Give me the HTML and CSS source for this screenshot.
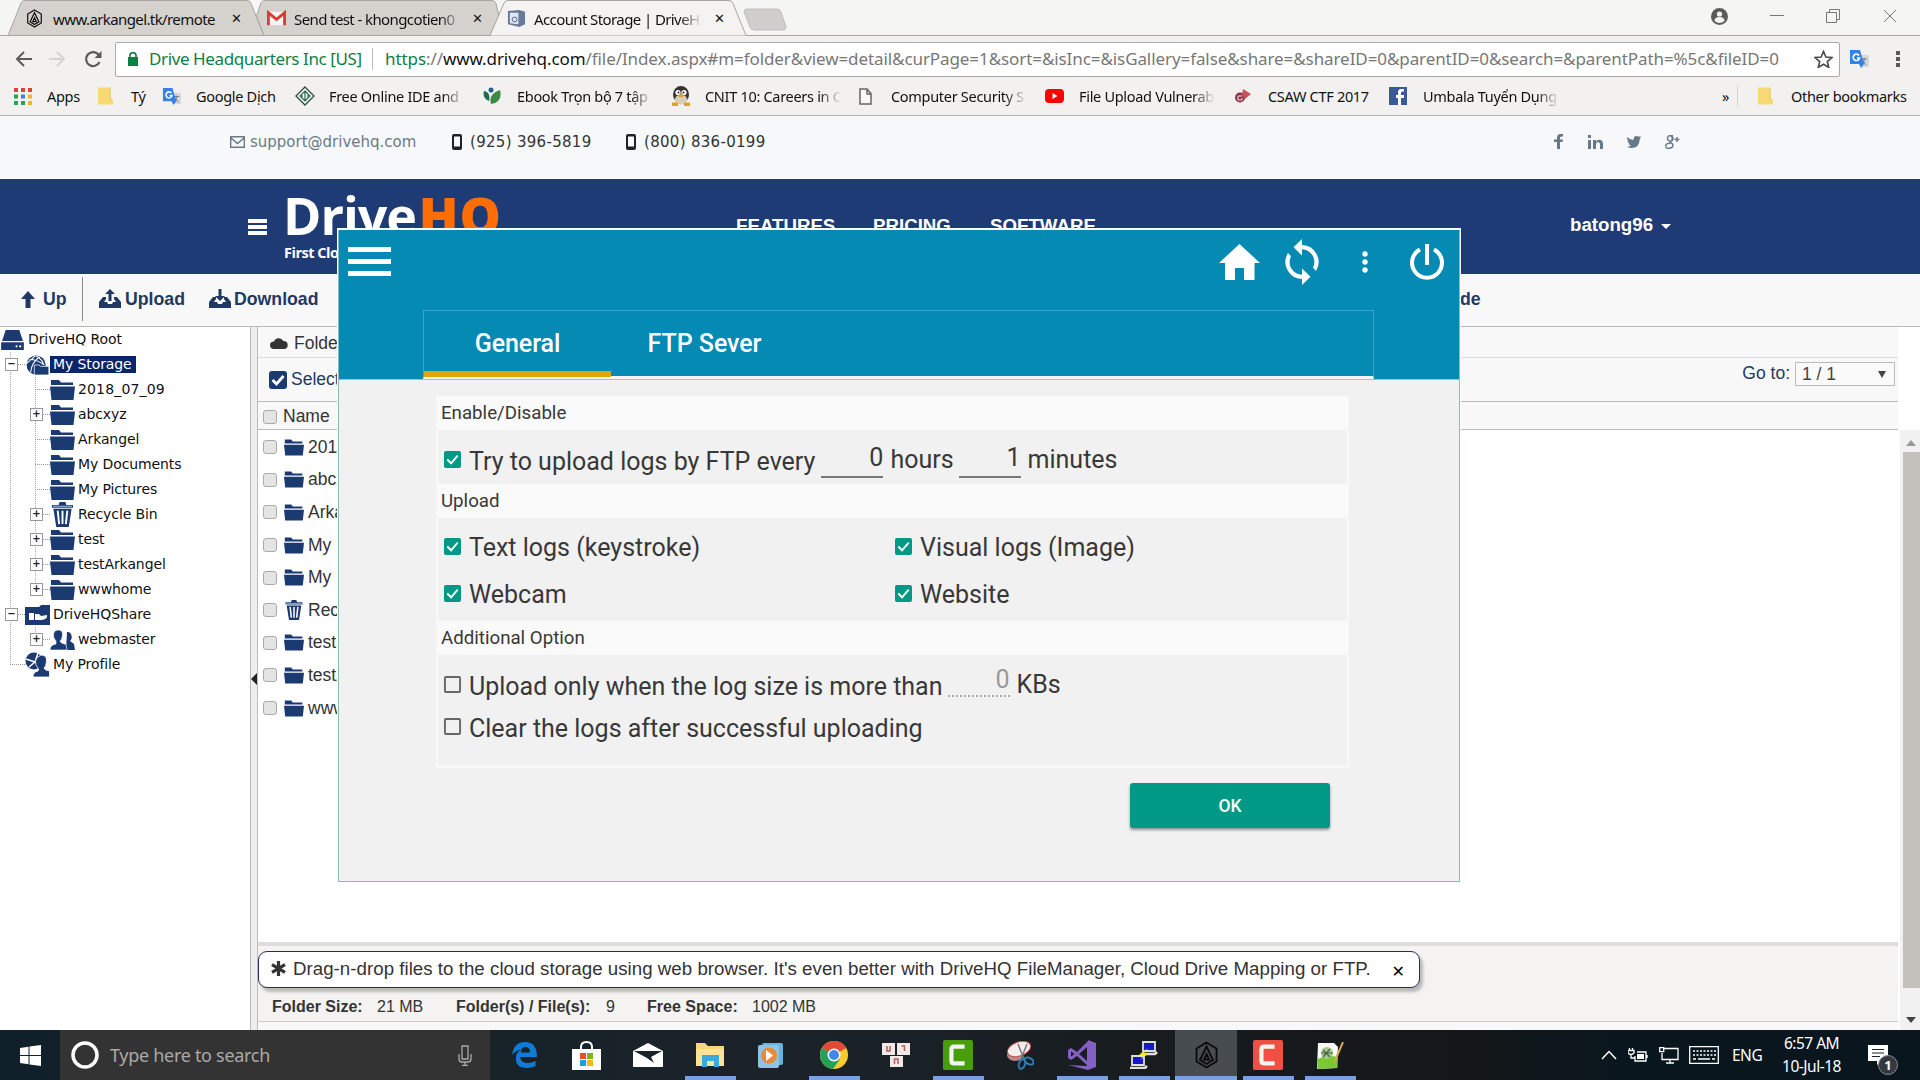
FILE: index.html
```html
<!DOCTYPE html>
<html lang="en">
<head>
<meta charset="utf-8">
<title>Account Storage | DriveHQ</title>
<link rel="stylesheet" href="styles.css">
</head>
<body>
<svg class="sprite" aria-hidden="true">
  <symbol id="arkangel" viewBox="0 0 24 28"><path d="M12 1.500 22 7.500v13l-10 6-10-6v-13zM12 5.500 5.500 19l6.500 4 6.500-4zM12 13l-2.500 5.500h5z" fill="none" stroke="currentColor" stroke-width="1.800"/></symbol>
  <symbol id="folder" viewBox="0 0 25 20"><path d="M1 0h8l2 2.500h12V5H1z M0 6.500h25L23.500 20H1.500z" fill="#1c3a72"/></symbol>
  <symbol id="bin" viewBox="0 0 24 26"><path d="M1 3h7l1-3h6l1 3h7v3H1z" fill="#1c3a72"/><path d="M2 4.500h20" stroke="#7d9ccc" stroke-width="1.500"/><path d="M2.500 7h19L18.500 26h-13z" fill="#1c3a72"/><path d="M7 9l1.500 14M12 9v14M17 9l-1.500 14" stroke="#fff" stroke-width="2"/></symbol>
  <symbol id="drive" viewBox="0 0 25 22"><path d="M5 0h15l4 12H1z" fill="#1c3a72"/><path d="M0 13.500h25V22H0z" fill="#1c3a72"/><circle cx="17" cy="18" r="1.200" fill="#fff"/><circle cx="21" cy="18" r="1.200" fill="#fff"/></symbol>
  <symbol id="globe" viewBox="0 0 25 22"><circle cx="11" cy="11" r="10.500" fill="#1c3a72"/><path d="M1 9q5-4 9-8M5 19Q6 8 15 2M4 5q8 0 16 6M11 1q7 4 8 9" fill="none" stroke="#fff" stroke-width="1.200"/><path d="M9 11h5l2 1.500h9V22H9z" fill="#1c3a72" stroke="#fff" stroke-width=".8"/></symbol>
  <symbol id="share" viewBox="0 0 25 20"><path d="M0 2h14l2-2h9v20H0z" fill="#1c3a72"/><path d="M4 8h5v7H4zM10 9h4l2 2 6-1q1 4-5 5h-7z" fill="#fff"/></symbol>
  <symbol id="users" viewBox="0 0 25 20"><path d="M16 0a4 5 0 0 1 3 9l4 3 1 6h-9z" transform="translate(1 2)" fill="#1c3a72"/><path d="M8 0q5 0 4.500 5T10 11q0 2 6 3.500l1 5.500H0q0-5 6-6V11Q3 8 3.500 4T8 0z" fill="#1c3a72" stroke="#fff" stroke-width=".6"/></symbol>
  <symbol id="profile" viewBox="0 0 25 25"><circle cx="9" cy="9" r="8.500" fill="#1c3a72"/><path d="M1 7l9 3 3-9M4 15l6-5 6 5" fill="none" stroke="#fff" stroke-width="1.500"/><path d="M16 3q6 0 5.500 6T19 16q0 2 5.500 3v6H8q0-5 5-6 1-.5 0-3-3-3-2.500-7T16 3z" fill="#1c3a72" stroke="#fff" stroke-width=".8"/></symbol>
  <symbol id="phone" viewBox="0 0 10 16"><rect width="10" height="16" rx="2" fill="#222"/><path d="M2 2.500h6v10H2z" fill="#f7f8f9"/></symbol>
  <symbol id="translate" viewBox="0 0 20 20"><path d="M8 6h12v12H12z" fill="#d5d7da"/><path d="M12 10h6M15 9v1q1 4-2 5m0-4 4 5" stroke="#6d7886" fill="none"/><path d="M1 1h10l4 14-3 4-2-4H1z" fill="#3283e8"/><path d="M10 6.500A3.200 3.200 0 1 0 10.500 9H8" fill="none" stroke="#fff" stroke-width="1.600"/></symbol>
  <symbol id="note" viewBox="0 0 16 18"><path d="M0 0h13v13h3v5H0z" fill="#f8d975"/><path d="M13 0v13h2" fill="none" stroke="#e6c55e"/></symbol>
  <symbol id="tray" viewBox="0 0 22 20"><path d="M0 13l4-5h3v2L5 13h3l1 2h4l1-2h3l-2-3V8h3l4 5v6H0z" fill="#1f3864"/></symbol>
  <symbol id="checked" viewBox="0 0 18 18"><rect width="18" height="18" rx="2" fill="#009985"/><path d="M3.500 9l4 4 7-8" fill="none" stroke="#fff" stroke-width="2"/></symbol>
  <symbol id="unchecked" viewBox="0 0 18 18"><rect x="1" y="1" width="16" height="16" rx="1" fill="none" stroke="#666" stroke-width="2"/></symbol>
  <symbol id="camtasia" viewBox="0 0 32 32"><rect width="32" height="32" rx="2" fill="currentColor"/><path d="M23 7H12q-3 0-3 3v12q0 3 3 3h11" fill="none" stroke="#f4f4ee" stroke-width="4.500"/></symbol>
</svg>

<header class="browser">
  <div class="tabstrip">
    <svg class="tabs-shape" width="800" height="36" viewBox="0 0 800 36">
      <path d="M8 35.500 21 3q1-2.500 4-2.500h222q3 0 4 3L264 35.500z" fill="#d5d2ce" stroke="#a7a5a2"/>
      <path d="M264 35.500 256.500 16 261 3q1-2.500 4-2.500h227q3 0 4 3l3 13-9 19z" fill="#d5d2ce" stroke="#a7a5a2"/>
      <path d="M0 35.500h490L504 3q1-2.500 4-2.500h221q3 0 4 3l13 32h54" fill="#f4f3f2" stroke="#a7a5a2"/>
      <path d="M747 9h30q3 0 4 3l5 15q0 3-3 3h-29q-3 0-4-3l-6-15q0-3 3-3z" fill="#d0ceca" stroke="#c0beba"/>
    </svg>
    <div class="tabs">
      <svg class="i18" viewBox="0 0 24 28"><use href="#arkangel"/></svg><span>www.arkangel.tk/remote</span><b>✕</b>
      <svg class="i18" viewBox="0 0 20 16"><path d="M0 1h20v14H0z" fill="#f5f5f5"/><path d="M1.500 15V2L10 9l8.500-7v13" fill="none" stroke="#d93c32" stroke-width="3"/></svg><span class="fade">Send test - khongcotien0</span><b>✕</b>
      <svg class="i18" viewBox="0 0 20 20"><path d="M1 2l12-1 6 2v13l-6 3-12-3z" fill="#6a7899"/><path d="M3 4h9v12l-9-1z" fill="#dfe6f3"/><circle cx="8" cy="11" r="2.500" fill="none" stroke="#53648a"/></svg><span class="fade">Account Storage | DriveH</span><b>✕</b>
    </div>
    <div class="window-controls">
      <svg width="17" height="17" viewBox="0 0 17 17"><circle cx="8.500" cy="8.500" r="8.500" fill="#5c5c5c"/><circle cx="8.500" cy="6" r="2.600" fill="#f4f4f3"/><path d="M3.500 13q0-4 5-4t5 4q-5 4-10 0z" fill="#f4f4f3"/></svg>
      <svg width="14" height="14" viewBox="0 0 14 14"><path d="M0 6.500h14" stroke="#777"/></svg>
      <svg width="14" height="14" viewBox="0 0 14 14"><path d="M.5 3.500h10v10H.5zM3.500 3V.5h10v10H11" fill="none" stroke="#777"/></svg>
      <svg width="14" height="14" viewBox="0 0 14 14"><path d="M1 1l12 12M13 1 1 13" stroke="#777"/></svg>
    </div>
  </div>
  <div class="addressbar">
    <svg width="17" height="16" viewBox="0 0 17 16"><path d="M17 8H2M9 1 2 8l7 7" fill="none" stroke="#5a5a5a" stroke-width="2"/></svg>
    <svg width="17" height="16" viewBox="0 0 17 16"><path d="M0 8h15M8 1l7 7-7 7" fill="none" stroke="#d4d4d2" stroke-width="2"/></svg>
    <svg width="18" height="18" viewBox="0 0 18 18"><path d="M15.500 12A7 7 0 1 1 14 4l1.500 2" fill="none" stroke="#5a5a5a" stroke-width="2.200"/><path d="M17.500 1v7h-7z" fill="#5a5a5a"/></svg>
    <div class="url-field">
      <svg width="10" height="14" viewBox="0 0 10 14"><path d="M0 5h10v9H0z" fill="#0b8043"/><path d="M2 6V3.500a3 2.800 0 0 1 6 0V6" fill="none" stroke="#0b8043" stroke-width="1.600"/></svg>
      <span class="company">Drive Headquarters Inc [US]</span>
      <span class="url"><em>https</em>://<strong>www.drivehq.com</strong>/file/Index.aspx#m=folder&amp;view=detail&amp;curPage=1&amp;sort=&amp;isInc=&amp;isGallery=false&amp;share=&amp;shareID=0&amp;parentID=0&amp;search=&amp;parentPath=%5c&amp;fileID=0</span>
      <svg class="star" width="19" height="18" viewBox="0 0 20 19"><path d="M10 1.500l2.500 6 6.500.5-5 4.200 1.600 6.300L10 15l-5.600 3.500L6 12.200 1 8l6.500-.5z" fill="none" stroke="#4c4c4c" stroke-width="1.700"/></svg>
    </div>
    <svg class="ext" width="20" height="20"><use href="#translate"/></svg>
    <svg width="4" height="18" viewBox="0 0 4 18"><path d="M0 1h4v4H0zM0 7h4v4H0zM0 13h4v4H0z" fill="#5a5a5a"/></svg>
  </div>
  <div class="bookmarks">
    <svg width="18" height="17" viewBox="0 0 18 17"><path d="M0 0h4v4H0zM7 0h4v4H7zM14 0h4v4h-4z" fill="#dd4436"/><path d="M0 6.500h4v4H0z" fill="#27a352"/><path d="M7 6.500h4v4H7z" fill="#3c80e8"/><path d="M14 6.500h4v4h-4zM14 13h4v4h-4z" fill="#f0b51e"/><path d="M0 13h4v4H0zM7 13h4v4H7z" fill="#27a352"/></svg><span>Apps</span>
    <svg width="15" height="18"><use href="#note"/></svg><span>Tý</span>
    <svg width="19" height="19"><use href="#translate"/></svg><span>Google Dịch</span>
    <svg width="20" height="20" viewBox="0 0 20 20"><path d="M10 1l9 9-9 9-9-9z" fill="#f8f8f8" stroke="#2c4b3c" stroke-width="1.300"/><path d="M10 5l5 5-5 5-5-5zM10 6v8M7 9v4M13 9v4" fill="none" stroke="#2c6b4c" stroke-width="1.200"/></svg><span class="fade">Free Online IDE and</span>
    <svg width="18" height="18" viewBox="0 0 18 18"><path d="M8 17Q5 7 17 3q3 12-9 14z" fill="#3d8a44"/><path d="M6 14Q-1 11 1 4q7 1 5 10z" fill="#1e6b4f"/><circle cx="8" cy="3" r="2.500" fill="#235f8e"/></svg><span class="fade">Ebook Trọn bộ 7 tập</span>
    <svg width="20" height="20" viewBox="0 0 20 20"><ellipse cx="10" cy="8.500" rx="8" ry="8.500" fill="#3a332c"/><ellipse cx="10" cy="13.500" rx="6" ry="5" fill="#d8cdb6"/><circle cx="7" cy="6.500" r="2.600" fill="#fff"/><circle cx="13" cy="6.500" r="2.600" fill="#fff"/><circle cx="7.500" cy="6.500" r="1" fill="#222"/><circle cx="12.500" cy="6.500" r="1" fill="#222"/><path d="M6.500 9.500q3.500-3 7 0-3.500 3.500-7 0zM1 16.500h6V20H1zM13 16.500h6V20h-6z" fill="#dfa02a"/></svg><span class="fade">CNIT 10: Careers in C</span>
    <svg width="13" height="17" viewBox="0 0 13 17"><path d="M1 1h7l4 4.500V16H1zM8 1v5h4" fill="#fafafa" stroke="#666" stroke-width="1.500"/></svg><span class="fade">Computer Security S</span>
    <svg width="19" height="14" viewBox="0 0 19 14"><rect width="19" height="14" rx="4" fill="#f00"/><path d="M7.500 4v6l5-3z" fill="#fff"/></svg><span class="fade">File Upload Vulnerab</span>
    <svg width="17" height="16" viewBox="0 0 17 16"><circle cx="6" cy="9.500" r="5" fill="#8e3545"/><path d="M9 1l8 5-6 5-3-4z" fill="#c9525a"/><path d="M8 8H4v4h4v-2" fill="none" stroke="#f4dede"/></svg><span>CSAW CTF 2017</span>
    <svg width="18" height="18" viewBox="0 0 18 18"><rect width="18" height="18" fill="#3b5998"/><path d="M12 18v-7h3V8h-3V6q0-1.500 1.500-1.500H15V2h-3Q9 2 9 5.500V8H7v3h2v7z" fill="#fff"/></svg><span class="fade">Umbala Tuyển Dụng</span>
    <span class="more">»</span><i class="sep"></i>
    <svg width="15" height="18"><use href="#note"/></svg><span>Other bookmarks</span>
  </div>
</header>

<div class="contact">
  <svg width="15" height="12" viewBox="0 0 15 12"><path d="M.7.700h13.600v10.600H.7zM1 2l6.500 5.500L14 2" fill="none" stroke="#6b7a88" stroke-width="1.400"/></svg><span class="mail">support@drivehq.com</span>
  <svg width="10" height="16"><use href="#phone"/></svg><span>(925) 396-5819</span>
  <svg width="10" height="16"><use href="#phone"/></svg><span>(800) 836-0199</span>
  <svg width="9" height="15" viewBox="0 0 9 15"><path d="M3 15V8H0V5.500h3V4q0-4 3.500-4H9v2.500H7.500Q6 2.500 6 4v1.500h3L8.500 8H6v7z" fill="#66788a"/></svg>
  <svg width="15" height="14" viewBox="0 0 15 14"><path d="M0 5h3v9H0zM0 0h3v3H0zM5 5h3v1.500Q9 4.700 11 4.700q4 0 4 4.300v5h-3V9.500Q12 7 10 7T8 9.500V14H5z" fill="#66788a"/></svg>
  <svg width="14" height="12" viewBox="0 0 14 12"><path d="M0 1q3 3 6.500 3Q6.500 0 9.500 0q1.500 0 2.200.8L14 0l-1.200 2 1.200-.2-1.300 1.500Q12.500 12 4.500 12 2 12 0 10.700q2.500 0 4-1.200-2-.3-2.500-2h1Q.500 6.500.500 4.500l1 .3Q-.5 3 0 1z" fill="#66788a"/></svg>
  <svg width="15" height="14" viewBox="0 0 15 14"><path d="M8 .7H4.500a2.800 2.800 0 1 0 1.500 0Q8 2.500 7 4.500T5 7q3 1.500 3 3.500T4.500 13.300.8 11 5.500 8.500M12 2v5M9.500 4.500h5" fill="none" stroke="#66788a" stroke-width="1.400"/></svg>
</div>

<nav class="navbar">
  <svg width="19" height="16" viewBox="0 0 19 16"><path d="M0 0h19v4H0zM0 6h19v4H0zM0 12h19v4H0z" fill="#fff"/></svg>
  <div class="brand"><div class="logo">Drive<b>HQ</b></div><div class="tagline">First Cloud</div></div>
  <span>FEATURES</span><span>PRICING</span><span>SOFTWARE</span>
  <span class="account">batong96<i></i></span>
</nav>

<div class="actions">
  <svg width="14" height="17" viewBox="0 0 14 17"><path d="M7 0l7 8H9.500v9h-5V8H0z" fill="#1f3864"/></svg><span>Up</span><i></i>
  <svg width="22" height="20" viewBox="0 0 22 20"><use href="#tray"/><path d="M11 0l5 5h-3.500v7h-3V5H6z" fill="#1f3864"/></svg><span>Upload</span>
  <svg width="22" height="20" viewBox="0 0 22 20"><use href="#tray"/><path d="M11 12l5-5h-3.500V0h-3v7H6z" fill="#1f3864"/></svg><span>Download</span>
  <span>de</span>
</div>

<main class="workspace">
  <aside class="tree">
    <div class="node root"><svg class="t"><use href="#drive"/></svg><span>DriveHQ Root</span></div>
    <div class="branch outer">
      <div class="node lv1 sel"><i class="box"></i><svg class="t"><use href="#globe"/></svg><span>My Storage</span></div>
      <div class="branch inner">
        <div class="node lv2"><i></i><svg class="t"><use href="#folder"/></svg><span class="date">2018_07_09</span></div>
        <div class="node lv2"><i class="box plus"></i><svg class="t"><use href="#folder"/></svg><span>abcxyz</span></div>
        <div class="node lv2"><i></i><svg class="t"><use href="#folder"/></svg><span>Arkangel</span></div>
        <div class="node lv2"><i></i><svg class="t"><use href="#folder"/></svg><span>My Documents</span></div>
        <div class="node lv2"><i></i><svg class="t"><use href="#folder"/></svg><span>My Pictures</span></div>
        <div class="node lv2"><i class="box plus"></i><svg class="t big"><use href="#bin"/></svg><span>Recycle Bin</span></div>
        <div class="node lv2"><i class="box plus"></i><svg class="t"><use href="#folder"/></svg><span>test</span></div>
        <div class="node lv2"><i class="box plus"></i><svg class="t"><use href="#folder"/></svg><span>testArkangel</span></div>
        <div class="node lv2"><i class="box plus"></i><svg class="t"><use href="#folder"/></svg><span>wwwhome</span></div>
      </div>
      <div class="node lv1"><i class="box"></i><svg class="t"><use href="#share"/></svg><span>DriveHQShare</span></div>
      <div class="branch inner">
        <div class="node lv2"><i class="box plus"></i><svg class="t"><use href="#users"/></svg><span>webmaster</span></div>
      </div>
      <div class="node lv1"><i></i><svg class="t big"><use href="#profile"/></svg><span>My Profile</span></div>
    </div>
  </aside>
  <div class="splitter"><i></i></div>
  <section class="files">
    <div class="crumb"><svg width="18" height="12" viewBox="0 0 18 12"><path d="M4 12a4 3.700 0 0 1 0-7.400A5 4.800 0 0 1 13.300 4 4 4 0 0 1 14 12z" fill="#333"/></svg><span>Folder</span></div>
    <div class="pick"><svg width="18" height="18" viewBox="0 0 18 18"><rect width="18" height="18" rx="3" fill="#1c3a72"/><path d="M3.500 9l4 4 7-8" fill="none" stroke="#fff" stroke-width="2.800"/></svg><span>Select</span>
      <span class="goto">Go to:</span><div class="select"><span>1 / 1</span><i></i></div></div>
    <div class="thead"><i class="cb"></i><span>Name</span></div>
    <div class="list">
      <div class="rows">
        <div><i class="cb"></i><svg><use href="#folder"/></svg><span>2018_07_09</span></div>
        <div><i class="cb"></i><svg><use href="#folder"/></svg><span>abcxyz</span></div>
        <div><i class="cb"></i><svg><use href="#folder"/></svg><span>Arkangel</span></div>
        <div><i class="cb"></i><svg><use href="#folder"/></svg><span>My Documents</span></div>
        <div><i class="cb"></i><svg><use href="#folder"/></svg><span>My Pictures</span></div>
        <div><i class="cb"></i><svg class="big"><use href="#bin"/></svg><span>Recycle Bin</span></div>
        <div><i class="cb"></i><svg><use href="#folder"/></svg><span>test</span></div>
        <div><i class="cb"></i><svg><use href="#folder"/></svg><span>testArkangel</span></div>
        <div><i class="cb"></i><svg><use href="#folder"/></svg><span>wwwhome</span></div>
      </div>
    </div>
    <div class="status">
      <div class="tip"><svg width="15" height="15" viewBox="0 0 15 15"><path d="M7.500 0v15M1 3.700l13 7.600M14 3.700 1 11.300" stroke="#333" stroke-width="3.200"/></svg><span>Drag-n-drop files to the cloud storage using web browser. It's even better with DriveHQ FileManager, Cloud Drive Mapping or FTP.</span><b>✕</b></div>
      <div class="sizes"><b>Folder Size:</b><span>21 MB</span><b>Folder(s) / File(s):</b><span>9</span><b>Free Space:</b><span>1002 MB</span></div>
    </div>
  </section>
  <div class="scrollbar"><i class="up"></i><div></div><i class="down"></i></div>
</main>

<div class="dialog">
  <div class="dialog-head">
    <div class="dialog-bar">
      <svg class="menu" width="43" height="29" viewBox="0 0 43 29"><path d="M0 0h43v5H0zM0 12h43v5H0zM0 24h43v5H0z" fill="#fff"/></svg>
      <svg width="41" height="36" viewBox="0 0 41 36"><path d="M20.500 0 41 19h-5.500v17H25V24h-9v12H6V19H0z" fill="#fff"/></svg>
      <svg width="34" height="46" viewBox="0 0 34 46"><path d="M17 0v6a17 17 0 0 1 14 26l-3-3.200A12.700 12.700 0 0 0 17 10.300v6.200L8.500 8.200zM17 46v-6A17 17 0 0 1 3 14l3 3.200a12.700 12.700 0 0 0 11 18.500v-6.200l8.500 8.300z" fill="#fff"/></svg>
      <svg width="6" height="22" viewBox="0 0 6 22"><circle cx="3" cy="3" r="2.700" fill="#fff"/><circle cx="3" cy="11" r="2.700" fill="#fff"/><circle cx="3" cy="19" r="2.700" fill="#fff"/></svg>
      <svg width="34" height="36" viewBox="0 0 34 36"><path d="M17 0v21M10 5.500a15 15 0 1 0 14 0" fill="none" stroke="#fff" stroke-width="4"/></svg>
    </div>
    <div class="dialog-tabs"><span class="on">General</span><span>FTP Sever</span></div>
  </div>
  <div class="dialog-body">
    <div class="panel">
      <h3>Enable/Disable</h3>
      <div class="every"><svg><use href="#checked"/></svg><span>Try to upload logs by FTP every</span><div class="num">0</div><span class="unit">hours</span><div class="num">1</div><span class="unit">minutes</span></div>
      <h3>Upload</h3>
      <div class="kinds">
        <label><svg><use href="#checked"/></svg><span>Text logs (keystroke)</span></label><label><svg><use href="#checked"/></svg><span>Visual logs (Image)</span></label>
        <label><svg><use href="#checked"/></svg><span>Webcam</span></label><label><svg><use href="#checked"/></svg><span>Website</span></label>
      </div>
      <h3>Additional Option</h3>
      <div class="extra">
        <label><svg><use href="#unchecked"/></svg><span>Upload only when the log size is more than</span><div class="num off">0</div><span class="unit">KBs</span></label>
        <label><svg><use href="#unchecked"/></svg><span>Clear the logs after successful uploading</span></label>
      </div>
    </div>
    <button class="ok">OK</button>
  </div>
</div>

<footer class="taskbar">
  <div class="start"><svg width="21" height="21" viewBox="0 0 21 21"><path d="M0 3l8.500-1.200V10H0zM9.500 1.600 21 0v10H9.500zM0 11h8.500v8.200L0 18zM9.500 11H21v10L9.500 19.400z" fill="#fff"/></svg></div>
  <div class="search">
    <svg width="28" height="28" viewBox="0 0 28 28"><circle cx="14" cy="14" r="12" fill="none" stroke="#fff" stroke-width="3.500"/></svg>
    <span>Type here to search</span>
    <svg width="14" height="21" viewBox="0 0 14 21"><path d="M4 1h6v13H4zM1 9v5q0 3 3 3h6q3 0 3-3V9M7 17v3M4 20.300h6" fill="none" stroke="#aaa" stroke-width="1.300"/></svg>
  </div>
  <div class="apps">
    <div><svg width="25" height="26" viewBox="0 0 25 26"><path d="M0 13Q2 0 13 0q12 0 12 15H8q1 6 8 6 4 0 7.500-2v5Q20 26 15 26 3 26 4 15 4.500 10 9 7.500 4 8 0 13zm9-2.500h9Q18 5 13.500 5T9 10.500z" fill="#0f7bd6"/></svg></div>
    <div><svg width="29" height="29" viewBox="0 0 29 29"><path d="M9 9V6q0-5 5.500-5T20 6v3" fill="none" stroke="#fff" stroke-width="2"/><path d="M0 8h29v21H0z" fill="#fff"/><path d="M8 12h6v6H8z" fill="#e84f28"/><path d="M15 12h6v6h-6z" fill="#7cb51f"/><path d="M8 19h6v6H8z" fill="#1ba0e1"/><path d="M15 19h6v6h-6z" fill="#fab61a"/></svg></div>
    <div><svg width="30" height="24" viewBox="0 0 30 24"><path d="M0 8 15 0l15 8v16H0z" fill="#fff"/><path d="M1 8h28L18 14l3 6-7-5z" fill="#182329"/></svg></div>
    <div class="run"><svg width="28" height="24" viewBox="0 0 28 24"><path d="M0 0h9l3 3h16v20H0z" fill="#f7d77e"/><path d="M0 6h28v17H0z" fill="#fbe397"/><path d="M6 24V12h17v12h-5v-6h-7v6z" fill="#3aa9dc"/></svg></div>
    <div class="left"><svg width="25" height="25" viewBox="0 0 25 25"><rect x="4" width="21" height="22" rx="2" fill="#69b4dd"/><rect y="2" width="21" height="23" rx="2" fill="#8cc5e5"/><circle cx="11" cy="12.500" r="8" fill="#e88a37"/><path d="M8 7v11l7-5.500z" fill="#fff"/></svg></div>
    <div class="run"><svg width="28" height="28" viewBox="0 0 28 28"><circle cx="14" cy="14" r="14" fill="#fccb2e"/><path d="M14 14 1.900 7A14 14 0 0 1 26.200 7z" fill="#df4b38"/><path d="M14 14 1.900 7A14 14 0 0 0 13 28l7-10z" fill="#24a05a"/><circle cx="14" cy="14" r="6.500" fill="#fff"/><circle cx="14" cy="14" r="5" fill="#4287ee"/></svg></div>
    <div><svg width="28" height="24" viewBox="0 0 28 24"><path d="M0 0h13v12H0zM15 0h13v12H15zM8 13h13v11H8z" fill="#f1e9e7"/><path d="M5 3v5h3V3M19.500 3h3v5M12.500 21v-5h3.500v5" fill="none" stroke="#b95a5a" stroke-width="1.500"/></svg></div>
    <div class="run green"><svg width="30" height="30"><use href="#camtasia"/></svg></div>
    <div><svg width="28" height="29" viewBox="0 0 28 29"><ellipse cx="9" cy="14" rx="8" ry="6" fill="#b98a8c"/><ellipse cx="13" cy="8" rx="12" ry="7" transform="rotate(-20 13 8)" fill="#f4eeee" stroke="#c64b4b"/><path d="M12 3l6 15M21 3l-6 15" stroke="#777" stroke-width="1.500"/><ellipse cx="16" cy="23" rx="3" ry="5" transform="rotate(20 16 23)" fill="none" stroke="#2d81b7" stroke-width="2"/><ellipse cx="23" cy="20" rx="3" ry="5" transform="rotate(-60 23 20)" fill="none" stroke="#2d81b7" stroke-width="2"/></svg></div>
    <div class="run"><svg width="28" height="30" viewBox="0 0 28 30"><path d="M20 0l8 3v24l-8 3L0 25l19 1V7l-8 7 8 7v4L9 16l-6 4-3-2V10l3-2 6 4L20 1zM3 11.500v5l3.500-2.500z" fill="#8560c4"/></svg></div>
    <div class="run"><svg width="28" height="28" viewBox="0 0 28 28"><path d="M13 1h12v9H13z" fill="#1518c7" stroke="#e0e0da" stroke-width="1.800"/><path d="M11 13h14l2-2" fill="none" stroke="#e0e0da" stroke-width="2.500"/><path d="M2 15h12v9H2z" fill="#1518c7" stroke="#e0e0da" stroke-width="1.800"/><path d="M0 27h15l2-2" fill="none" stroke="#e0e0da" stroke-width="2.500"/><path d="M18 7l-9 7h5l-4 5 9-7h-5z" fill="#f9ed22"/></svg></div>
    <div class="run active"><svg width="25" height="28"><use href="#arkangel"/></svg></div>
    <div class="run red"><svg width="30" height="30"><use href="#camtasia"/></svg></div>
    <div class="run"><svg width="28" height="27" viewBox="0 0 28 27"><path d="M2 1h16l4 4-1 21-20 1z" fill="#f7fbf5"/><path d="M1.500 17q10-5 20-2v11l-20 1z" fill="#7ac832"/><circle cx="11" cy="11" r="6" fill="#a5cb8c"/><path d="M7 8l7 7M14 7l-7 8M5 11h12" stroke="#47653f" stroke-width="1.200"/><path d="M27 0 18 21" stroke="#d9a545" stroke-width="2"/></svg></div>
  </div>
  <div class="systray">
    <svg width="16" height="10" viewBox="0 0 16 10"><path d="M1 9l7-7.500L15 9" fill="none" stroke="#fff" stroke-width="1.500"/></svg>
    <svg width="20" height="14" viewBox="0 0 20 14"><path d="M9 4h9v9H7V8M19 7v3" fill="none" stroke="#fff" stroke-width="1.300"/><path d="M9 6h7v5H9z" fill="#fff"/><path d="M1.500 0v2M4.500 0v2M0 2.500h6V5q-3 3-6 0zM3 6v4h4" fill="none" stroke="#fff" stroke-width="1.300"/></svg>
    <svg width="20" height="17" viewBox="0 0 20 17"><path d="M5 1.500h14v11H3V6M11 13v3M7 16h8M.7.700h4v4h-4z" fill="none" stroke="#fff" stroke-width="1.300"/></svg>
    <svg width="30" height="18" viewBox="0 0 30 18"><path d="M.7.700h28.600v16.600H.7z" fill="none" stroke="#fff" stroke-width="1.300"/><path d="M4 5h23M4 9h23" stroke="#fff" stroke-width="1.500" stroke-dasharray="2 1.500"/><path d="M4 13h3M9 13h12M23 13h3" stroke="#fff" stroke-width="1.500"/></svg>
    <span>ENG</span>
    <div class="clock"><span>6:57 AM</span><span>10-Jul-18</span></div>
    <div class="notice"><svg width="20" height="20" viewBox="0 0 20 20"><path d="M0 0h20v16h-6l-5 4v-4H0z" fill="#fff"/><path d="M4 4.500h12M4 8h12M4 11.500h8" stroke="#16242b" stroke-width="1.200"/></svg><b>1</b></div>
  </div>
</footer>
</body>
</html>
```

FILE: styles.css
```css
* { box-sizing: border-box; }
body { margin: 0; width: 1920px; height: 1080px; overflow: hidden; position: relative; display: flex; flex-direction: column; font-family: "Liberation Sans", sans-serif; font-size: 17.5px; color: #333; background: #fff; }
span, b { white-space: nowrap; }
svg { display: block; flex: none; }
.sprite { position: absolute; width: 0; height: 0; }
.fade { overflow: hidden; -webkit-mask-image: linear-gradient(90deg, #000 calc(100% - 22px), transparent); mask-image: linear-gradient(90deg, #000 calc(100% - 22px), transparent); }

/* Browser chrome */
.browser { flex: none; height: 116px; background: #f2f1f0; border-bottom: 1px solid #b5b5b4; font-family: "Noto Sans", sans-serif; color: #111; }
.tabstrip { height: 36px; display: flex; justify-content: space-between; background: linear-gradient(#f5f5f4 35px, #a7a5a2 35px); position: relative; }
.tabs-shape { position: absolute; left: 0; top: 0; }
.tabs { position: relative; display: grid; grid-template-columns: 28px 172px 42px 27px 172px 41px 27px 174px 30px; padding-left: 25px; align-items: center; height: 37px; font-size: 15px; letter-spacing: -.6px; }
.tabs span { max-width: 168px; }
.tabs b { font: 700 13px "DejaVu Sans", sans-serif; padding-left: 6px; letter-spacing: 0; }
.i18 { width: 19px; height: 19px; }
.window-controls { display: grid; grid-template-columns: 59px 56px 57px 16px; padding-right: 21px; align-items: center; height: 32px; justify-items: start; }
.addressbar { height: 46px; display: grid; grid-template-columns: 34px 35px 31px 1743px 38px 4px; padding-left: 15px; align-items: center; }
.url-field { width: 1725px; height: 35px; background: #fff; border: 1px solid #aaa; border-radius: 2px; display: flex; align-items: center; padding: 0 6px 0 12px; font-size: 17px; }
.company { width: 224px; margin-left: 11px; color: #0b8043; border-right: 1px solid #bbb; letter-spacing: -.39px; height: 22px; line-height: 21px; }
.url { margin-left: 12px; color: #777; letter-spacing: -.085px; line-height: 22px; }
.url em { font-style: normal; color: #0b8043; }
.url strong { font-weight: 400; color: #111; }
.star { margin-left: auto; }
.addressbar .ext { margin-left: -9px; }
.bookmarks { height: 28px; display: grid; grid-template-columns: 33px 51px 33px 31px 34px 99px 34px 154px 34px 154px 34px 154px 32px 154px 34px 155px 34px 121px 34px 149px 165px 21px 33px 130px; padding: 0 0 0 14px; align-items: center; font-size: 14.500px; letter-spacing: -.3px; }
.bookmarks .fade { max-width: 136px; }
.more { justify-self: end; padding-right: 8px; }
.sep { width: 1px; height: 22px; background: #d5d5d4; }

/* Contact strip */
.contact { flex: none; height: 63px; background: #f7f8f9; display: grid; grid-template-columns: 20px 202px 18px 156px 18px 910px 34px 39px 38px 16px; padding: 0 0 12px 230px; align-items: center; font: 15px "DejaVu Sans", sans-serif; letter-spacing: .3px; }
.mail { color: #6b7a88; letter-spacing: 0; }

/* Site navigation */
.navbar { flex: none; height: 95px; background: #1f3b75; display: grid; grid-template-columns: 36px 452px 137px 117px 580px 200px; padding-left: 248px; align-items: center; color: #fff; font-weight: 700; font-size: 18.700px; }
.navbar span { margin-top: -1px; }
.brand { height: 95px; font-family: "Open Sans", sans-serif; padding-top: 8px; }
.logo { font-size: 52px; line-height: 56px; font-weight: 700; letter-spacing: -1.100px; margin-left: -1px; }
.logo b { color: #ff6d05; margin-left: 3px; letter-spacing: 1px; }
.tagline { font-size: 14.500px; line-height: 20px; font-weight: 700; letter-spacing: -.5px; }
.navbar .account { display: flex; align-items: center; gap: 8px; margin-top: -3px; }
.account i { border: 5px solid transparent; border-top-color: #fff; border-bottom: 0; margin-top: 3px; }

.actions { flex: none; height: 53px; background: #f8f8f8; border-bottom: 1px solid #b6bab8; display: grid; grid-template-columns: 22px 39px 17px 26px 84px 25px 1226px 50px; padding: 0 0 2px 21px; align-items: center; font-weight: 700; font-size: 17.700px; color: #1f3864; }
.actions i { width: 1px; height: 44px; background: #888; }

/* Folder tree */
.workspace { flex: none; height: 703px; display: grid; grid-template-columns: 250px 8px 1640px 22px; background: #fff; }
.tree { font: 14px/25px "DejaVu Sans", sans-serif; letter-spacing: -.1px; color: #111; }
.date { letter-spacing: .15px; }
.node { height: 25px; display: flex; align-items: center; }
.node span { margin-left: 3px; }
.t { width: 25px; height: 20px; }
.t.big { height: 25px; }
.node i { display: flex; align-items: center; height: 11px; width: 15px; }
.node i::after { content: ""; flex: 1; border-top: 1px dotted #999; }
.node .box::before { content: "−"; width: 11px; height: 11px; border: 1px solid #999; background: #fff; font: 700 10px/9px "DejaVu Sans", sans-serif; text-align: center; letter-spacing: 0; color: #222; }
.node .plus::before { content: "+"; }
.lv1 { margin-left: -5px; }
.lv1 i:not(.box), .lv2 i:not(.box) { margin-left: 5px; width: 15px; }
.lv1 i.box, .lv2 i.box { width: 20px; }
.outer { margin-left: 10px; background: repeating-linear-gradient(#aaa 0 1px, #fff 1px 2px) no-repeat left top / 1px 312px; }
.inner { margin-left: 25px; background: repeating-linear-gradient(#aaa 0 1px, #fff 1px 2px) no-repeat left top / 1px calc(100% - 12px); }
.inner .lv2 { margin-left: -5px; }
.sel span { background: #0a246a; color: #fff; line-height: 17px; padding: 0 4px 0 3px; margin-left: 0; }

.splitter { background: #eee; border: solid #bbb; border-width: 0 1px; display: flex; align-items: center; }
.splitter i { border: 6px solid transparent; border-right-color: #222; border-left: 0; }

/* File list */
.files { display: flex; flex-direction: column; background: #f8f8f8; }
.crumb { height: 31px; border-bottom: 1px solid #ddd; display: flex; align-items: center; gap: 6px; padding: 2px 0 0 12px; }
.pick { height: 44px; border-bottom: 1px solid #bbb; display: flex; align-items: center; gap: 4px; padding-left: 11px; color: #1f3864; }
.goto { margin: -13px 1px 0 auto; }
.select { width: 100px; height: 24px; border: 1px solid #bbb; margin: -11px 3px 0 0; display: flex; align-items: center; justify-content: space-between; padding: 0 8px 0 6px; color: #444; background: #fafafa; }
.select i { border: 4px solid transparent; border-top: 7px solid #444; border-bottom: 0; }
.thead { height: 28px; border-bottom: 1px solid #bbb; display: flex; align-items: center; gap: 6px; padding: 2px 0 0 5px; }
.cb { width: 14px; height: 14px; border: 1px solid #aaa; border-radius: 3px; background: #e4e4e4; }
.list { height: 512px; background: #fff; padding-top: 1px; }
.rows { width: 200px; }
.rows > div { height: 32.600px; display: flex; align-items: center; padding-left: 5px; }
.rows svg { width: 20px; height: 17px; margin: 0 4px 0 7px; }
.rows svg.big { height: 20px; }
.status { height: 80px; border-top: 4px solid #ddd; border-bottom: 1px solid #ccc; background: #f4f3f2; padding-top: 5px; }
.tip { width: 1162px; height: 37px; border: 1px solid #282c58; border-radius: 9px; background: #fff; box-shadow: 3px 4px 3px #8888; display: flex; align-items: center; padding: 0 14px 2px 12px; font-size: 18.700px; letter-spacing: .028px; }
.tip span { margin-left: 7px; }
.tip b { margin: 6px 0 0 auto; font: 700 16px "DejaVu Sans", sans-serif; color: #000; }
.sizes { display: grid; grid-template-columns: 105px 79px 150px 41px 105px 80px; padding: 9px 0 0 14px; font-size: 16px; line-height: 20px; }
.scrollbar { margin: 103px 0 0; padding: 0 0 7px 4px; display: flex; flex-direction: column; align-items: center; background: linear-gradient(90deg, #fff 2px, #f1f1f1 2px); }
.scrollbar div { width: 17px; height: 536px; background: #c4c1bc; margin: 6px 0 auto; }
.scrollbar i { border: 5px solid transparent; }
.scrollbar .up { border-bottom: 6px solid #999; border-top: 0; margin-top: 10px; }
.scrollbar .down { border-top: 6px solid #444; border-bottom: 0; }

/* Settings dialog, floating over the page */
.dialog { position: absolute; left: 337px; top: 228px; width: 1124px; height: 655px; border: 2px solid #fff; border-width: 2px 1px 1px; background: #f1f1f1; box-shadow: inset 0 0 0 1px #8bb; font-family: Roboto, sans-serif; color: #383838; }
.dialog-head { height: 150px; background: #058ab3; margin: 0 1px; padding-top: 8px; border-bottom: 1px solid #7fd0e4; }
.dialog-bar { height: 48px; display: grid; grid-template-columns: 871px 66px 77px 48px 40px; padding-left: 9px; align-items: center; }
.menu { margin-top: -1px; }
.dialog-tabs { margin: 24px 0 0 84px; width: 951px; height: 69px; border: 1px solid #38a7cb; border-bottom: 3px solid #f4f4f4; display: flex; color: #fff; font-size: 25px; font-weight: 500; line-height: 66px; letter-spacing: -.05px; }
.dialog-tabs span { width: 187px; text-align: center; height: 66px; }
.dialog-tabs .on { border-bottom: 6px solid #dca70e; }
.dialog-body { padding: 16px 111px 0 98px; display: flex; flex-direction: column; align-items: flex-end; }
.panel { width: 913px; height: 372px; border: 2px solid #f8f8f8; border-top: 0; font-size: 25px; }
.panel svg { width: 17px; height: 17px; }
.panel h3 { margin: 0; padding-left: 3px; height: 34px; font-size: 18.700px; line-height: 34px; font-weight: 400; background: #fafafa; }
.every { height: 54px; padding: 0 0 0 6px; display: flex; align-items: center; }
.every > svg { margin-top: 5px; }
.every span { margin: 9px 0 0 8px; }
.every .num { margin: 3px 0 0 6px; width: 62px; }
.num { height: 38px; border-bottom: 2px solid #777; text-align: right; line-height: 36px; }
.every .unit { margin: 5px 0 0 7px; }
.every .unit + .num { margin-left: 5px; }
.kinds { height: 103px; padding: 5px 0 0 6px; display: grid; grid-template: 48px 46px / 451px 1fr; }
.kinds label, .extra label { display: flex; align-items: center; }
.kinds svg { margin-top: -1px; }
.kinds span, .extra span { margin-left: 8px; }
.extra { padding: 10px 0 0 6px; }
.extra label { height: 42px; }
.extra svg { margin-top: -3px; }
.extra .num { width: 62px; margin: -16px 0 0 5px; color: #999; border-bottom-style: dotted; border-bottom-color: #aaa; line-height: 41px; }
.extra .unit { margin: -4px 0 0 7px; }
.ok { width: 200px; height: 45px; margin: 15px 19px 0 0; border: 0; border-radius: 3px; background: #009985; box-shadow: 0 2px 3px #0006; color: #fff; font: 500 17.500px Roboto, sans-serif; }

/* Taskbar */
.taskbar { flex: none; height: 50px; display: flex; background: linear-gradient(90deg, #10202a, #1b2329 40%, #151718 75%, #09161e 85%); color: #fff; }
.start { width: 60px; display: flex; align-items: center; justify-content: center; }
.search { width: 430px; background: #333; display: flex; align-items: center; padding: 0 18px 0 11px; font: 18px "Noto Sans", sans-serif; letter-spacing: -.3px; color: #aaa; }
.search span { margin: 0 auto 0 11px; }
.apps { display: grid; grid-template-columns: repeat(14, 62px); margin-left: 3px; width: 868px; }
.apps div { display: flex; align-items: center; justify-content: center; }
.apps .left { padding-right: 4px; }
.apps .run { background: linear-gradient(#76a3df, #76a3df) no-repeat center bottom / 51px 4px; }
.apps .active { background: linear-gradient(#464c50 46px, #76a3df 46px); color: #0a0a0a; }
.apps .green { color: #489d0a; }
.apps .red { color: #ee5143; }
.systray { margin-left: 240px; display: grid; grid-template-columns: 27px 31px 30px 43px 45px 69px 60px; align-items: center; font: 15.500px/23px "Noto Sans", sans-serif; letter-spacing: -.5px; }
.clock { display: grid; justify-items: center; }
.notice { margin-left: 22px; position: relative; }
.notice b { position: absolute; left: 10px; top: 10px; width: 20px; height: 20px; border: 1px solid #889; border-radius: 50%; background: #33393d; font: 700 13px/18px "Noto Sans", sans-serif; text-align: center; letter-spacing: 0; }
```
